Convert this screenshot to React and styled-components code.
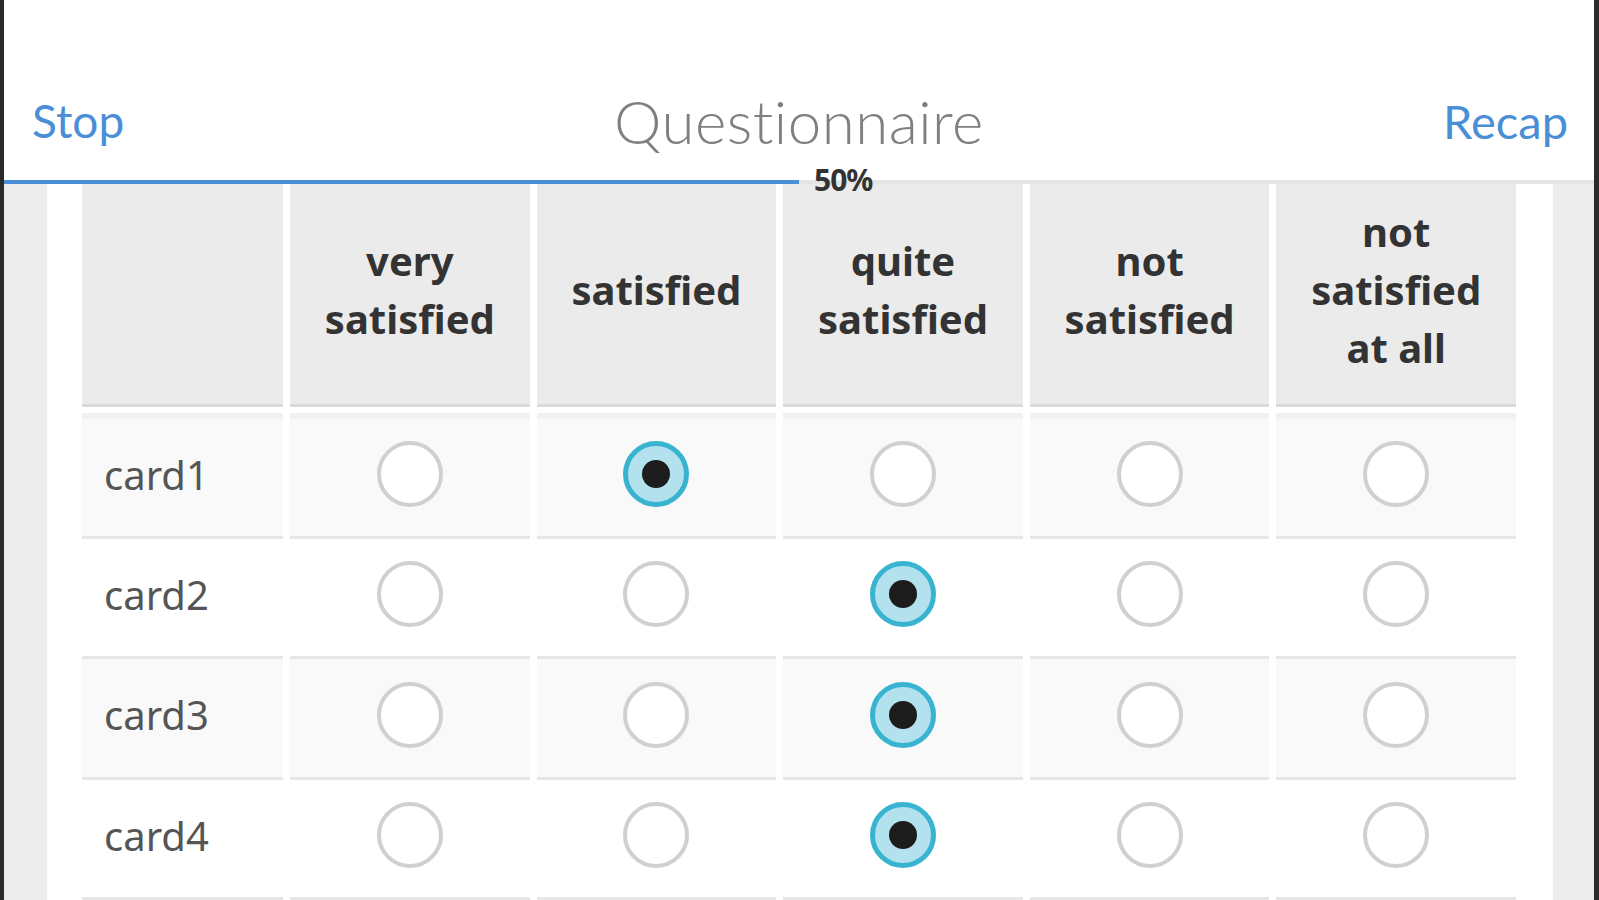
import React, { useState } from "react";
import styled, { createGlobalStyle } from "styled-components";

const GlobalStyle = createGlobalStyle`
  html, body {
    margin: 0;
    padding: 0;
    background: #2a2a2a;
    font-family: "Noto Sans", "Lato", sans-serif;
  }
  * {
    box-sizing: border-box;
  }
`;

const Frame = styled.div`
  height: 100vh;
  margin: 0 5px 0 4px;
  display: flex;
  flex-direction: column;
  background: #ececec;
  overflow: hidden;
`;

const TopBar = styled.header`
  height: 183px;
  padding-top: 62px;
  display: grid;
  grid-template-columns: 1fr auto 1fr;
  align-items: center;
  background: #ffffff;
`;

const NavLink = styled.a`
  font-family: "Lato", sans-serif;
  font-size: ${(props) => (props.$right ? "47px" : "46px")};
  color: #4a8fd6;
  cursor: pointer;
  justify-self: ${(props) => (props.$right ? "end" : "start")};
  padding: ${(props) => (props.$right ? "0 26px 0 0" : "0 0 0 28px")};
`;

const Title = styled.h1`
  margin: 0;
  font-family: "Lato", sans-serif;
  font-weight: 300;
  font-size: 60px;
  color: #7f7f7f;
  letter-spacing: 0.5px;
`;

const Track = styled.div`
  position: relative;
  height: 4px;
  background: #e4e4e4;
`;

const Fill = styled.div`
  height: 100%;
  background: #4a8fd6;
`;

const Percent = styled.span`
  position: absolute;
  top: -18px;
  font-size: 30px;
  font-weight: 700;
  color: #333;
  letter-spacing: -1px;
  line-height: 36px;
`;

const Content = styled.main`
  flex: 1;
  display: flex;
  padding: 0 41px 0 43px;
`;

const Card = styled.section`
  flex: 1;
  background: #ffffff;
  padding: 0 37px 0 35px;
`;

const Row = styled.div`
  display: grid;
  grid-template-columns: 201px repeat(5, 1fr);
  column-gap: 7px;
  margin-bottom: ${(props) => (props.$head ? "6px" : "0")};
`;

const HeadCell = styled.div`
  height: 223px;
  display: flex;
  align-items: center;
  justify-content: center;
  text-align: center;
  padding: 0 20px 7px;
  background: #ebebeb;
  border-bottom: 3px solid #dadada;
  font-size: 40px;
  font-weight: 700;
  line-height: 58px;
  color: #333;
`;

const Cell = styled.div`
  height: ${(props) => (props.$first ? "126px" : "120.5px")};
  display: flex;
  align-items: center;
  justify-content: ${(props) => (props.$label ? "flex-start" : "center")};
  padding: 0 0 6px ${(props) => (props.$label ? "22px" : "0")};
  background: ${(props) => (props.$odd ? "#f9f9f9" : "#ffffff")};
  border-top: ${(props) => (props.$first ? "6px solid #f1f1f1" : "none")};
  border-bottom: 3px solid #e6e6e6;
  font-size: 40px;
  color: #555;
`;

const Radio = styled.span`
  position: relative;
  width: 66px;
  height: 66px;
  border-radius: 50%;
  cursor: pointer;
  border: ${(props) =>
    props.$checked ? "5px solid #38b4d0" : "4px solid #d0d0d0"};
  background: ${(props) => (props.$checked ? "#b3e2ee" : "#ffffff")};
  &::after {
    content: "";
    display: ${(props) => (props.$checked ? "block" : "none")};
    position: absolute;
    left: 50%;
    top: 50%;
    width: 28px;
    height: 28px;
    margin: -14px 0 0 -14px;
    border-radius: 50%;
    background: #1c1c1c;
  }
`;

const columns = [
  "very satisfied",
  "satisfied",
  "quite satisfied",
  "not satisfied",
  "not satisfied at all",
];

const initial = { card1: 1, card2: 2, card3: 2, card4: 2 };

const App = () => {
  const [answers, setAnswers] = useState(initial);
  const progress = 50;

  return (
    <>
      <GlobalStyle />
      <Frame>
        <TopBar>
          <NavLink>Stop</NavLink>
          <Title>Questionnaire</Title>
          <NavLink $right>Recap</NavLink>
        </TopBar>
        <Track>
          <Fill style={{ width: `${progress}%` }} />
          <Percent style={{ left: `calc(${progress}% + 15px)` }}>
            {progress}%
          </Percent>
        </Track>
        <Content>
          <Card>
            <Row $head>
              <HeadCell />
              {columns.map((c) => (
                <HeadCell key={c}>{c}</HeadCell>
              ))}
            </Row>
            {Object.keys(answers).map((card, i) => (
              <Row key={card}>
                <Cell $label $odd={i % 2 === 0} $first={i === 0}>
                  {card}
                </Cell>
                {columns.map((c, j) => (
                  <Cell key={c} $odd={i % 2 === 0} $first={i === 0}>
                    <Radio
                      $checked={answers[card] === j}
                      onClick={() => setAnswers({ ...answers, [card]: j })}
                    />
                  </Cell>
                ))}
              </Row>
            ))}
          </Card>
        </Content>
      </Frame>
    </>
  );
};

export default App;
